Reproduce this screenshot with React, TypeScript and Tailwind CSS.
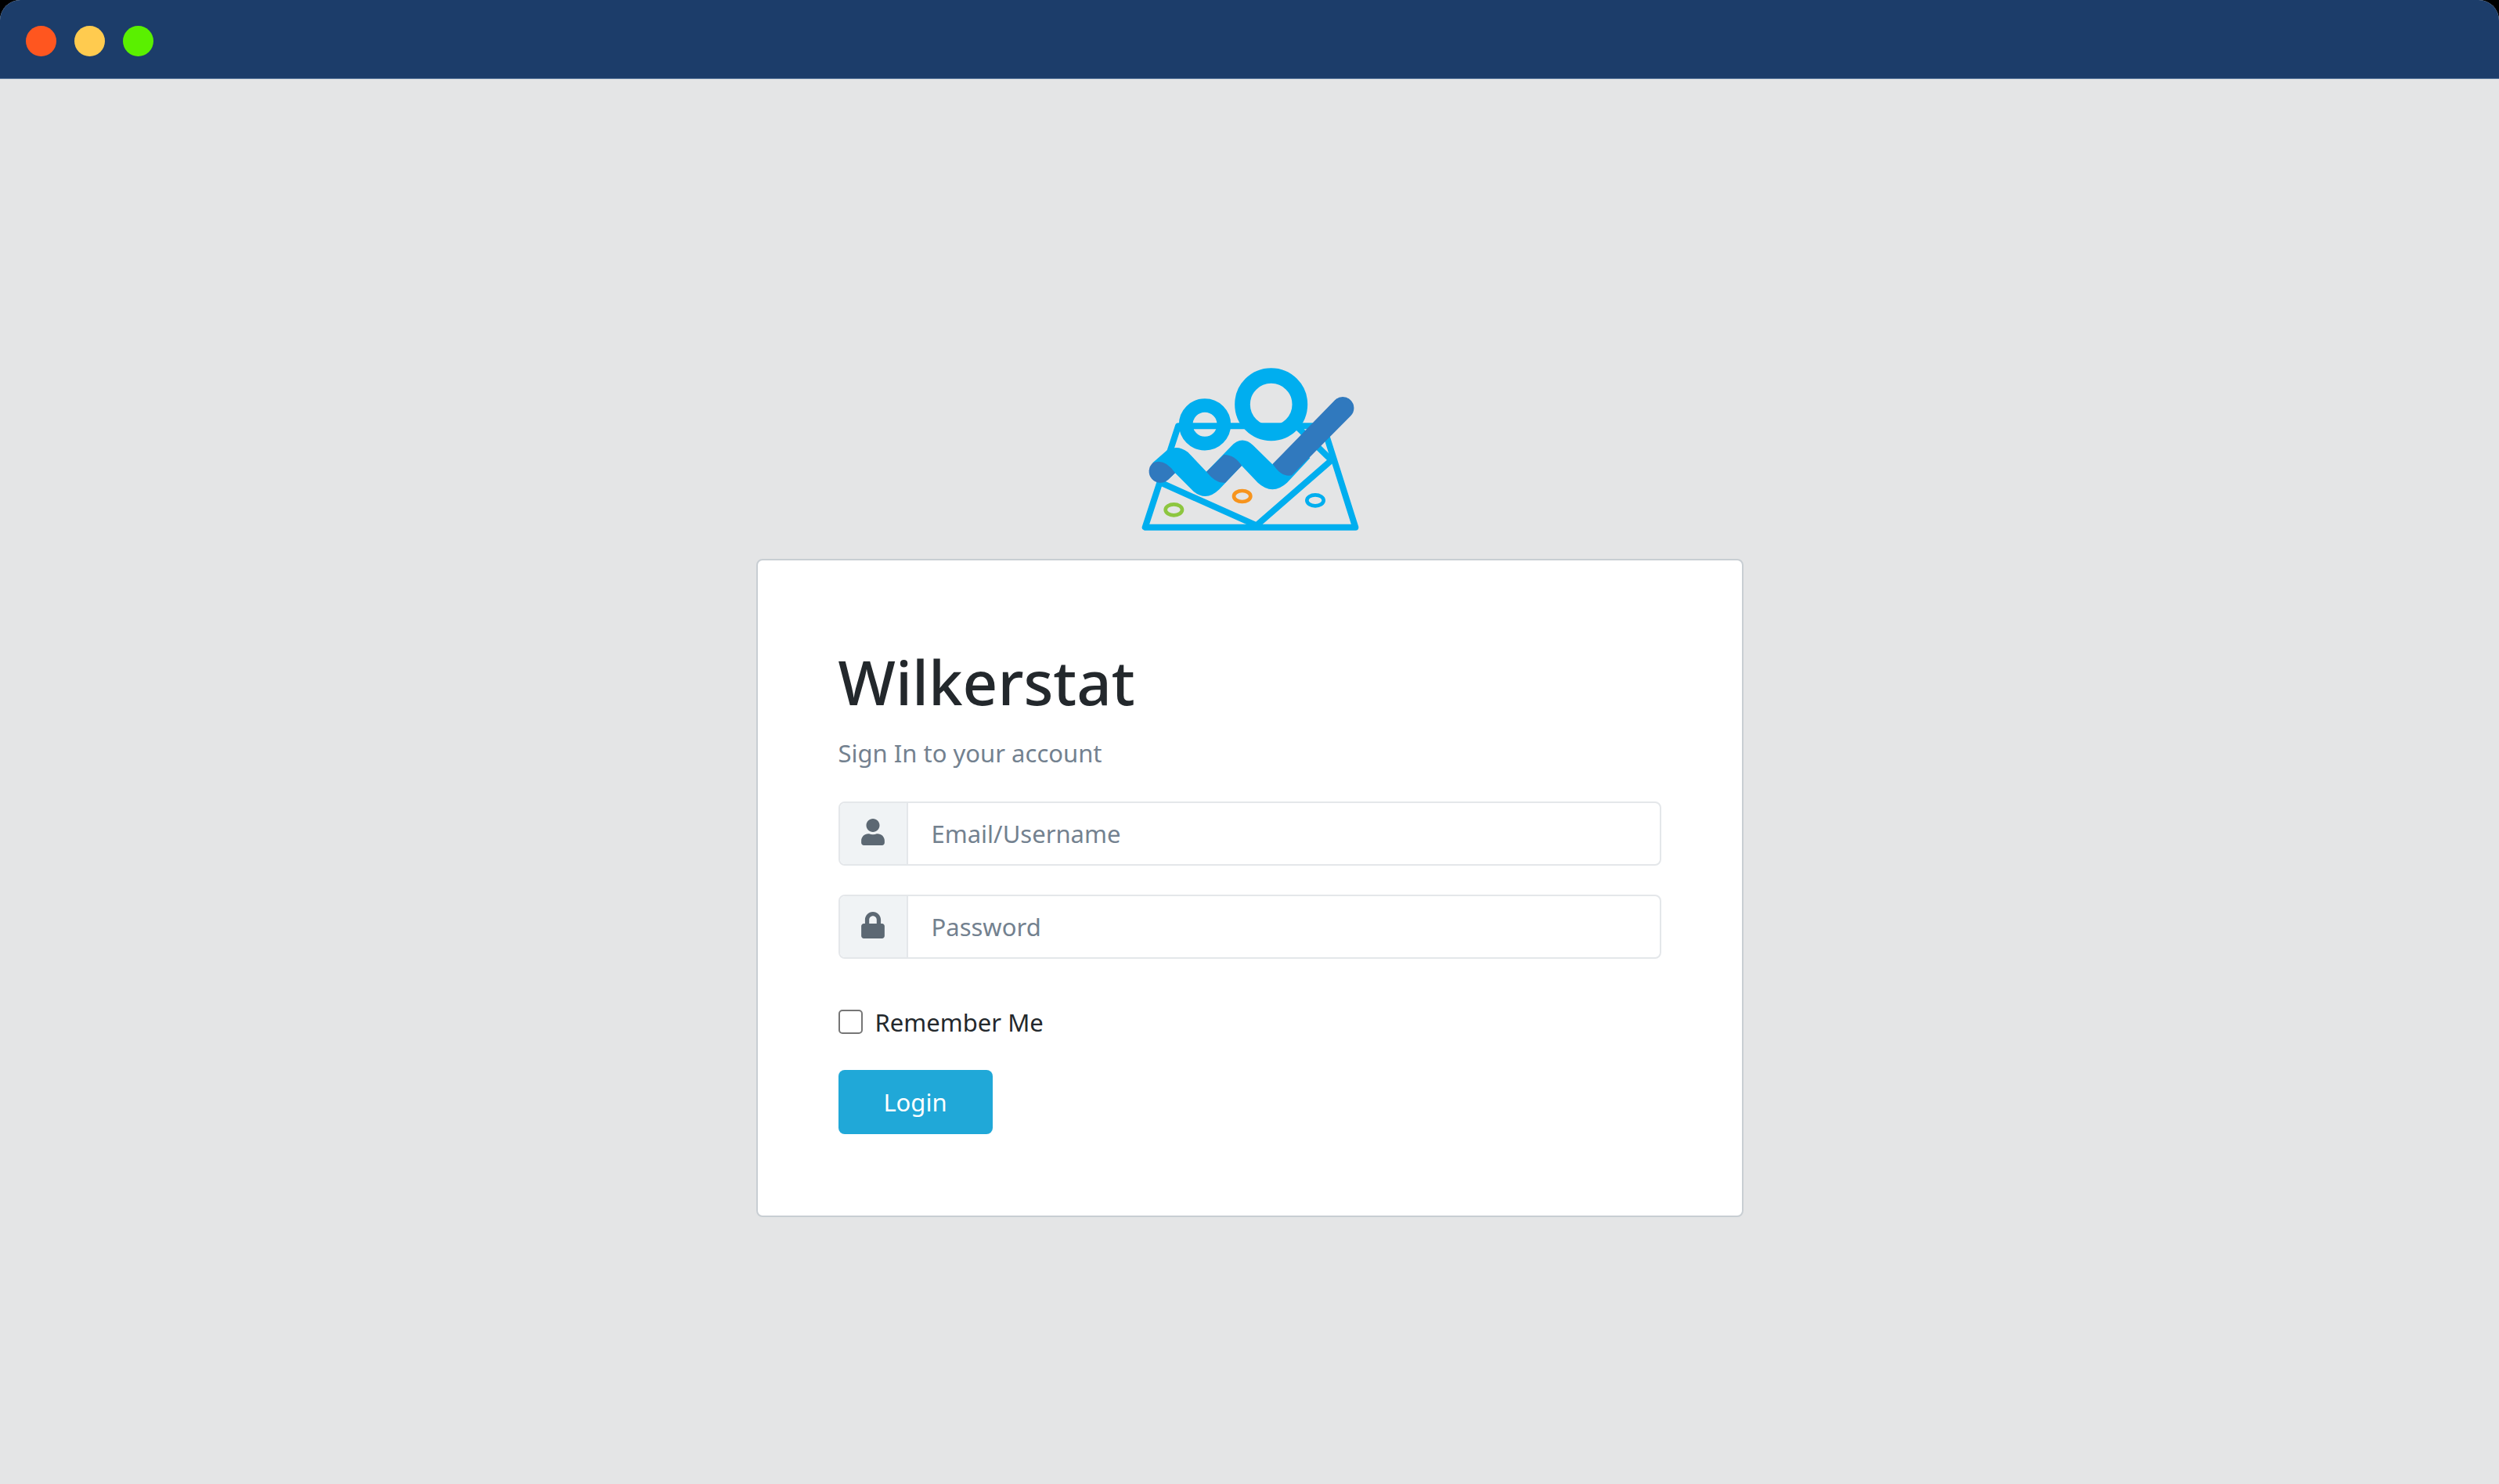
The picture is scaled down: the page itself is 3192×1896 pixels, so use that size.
import { FaLock, FaUser } from "react-icons/fa";
import type { ReactNode } from "react";

function Logo() {
  return (
    <svg
      viewBox="0 -21 936 813"
      className="h-[271px] w-[312px]"
      role="img"
      aria-label="Wilkerstat"
      fill="none"
    >
      <g stroke="#00aeef" strokeWidth="24" strokeLinejoin="round">
        <path d="M68 671H874L751 283H195Z" />
        <path d="M128 500L495 664L782 414L655 290" />
      </g>
      <circle cx="297" cy="277" r="73" stroke="#00aeef" strokeWidth="53" />
      <circle cx="551" cy="200" r="110" stroke="#00aeef" strokeWidth="59" />
      <path
        fill="#00aeef"
        d="M97 424L152 376Q192 353 232 383L303 458L396 362Q438 316 482 357L556 430L640 346L700 406L612 500Q556 551 500 500L438 435L352 526Q303 574 254 534L183 463L155 490Z"
      />
      <g fill="#3079be">
        <path d="M98 424Q143 405 183 463L155 490A42 42 0 1 1 98 424Z" />
        <path d="M303 458L370 393Q410 392 438 435L375 500Q340 505 303 458Z" />
        <path d="M557 428L795 184A42 42 0 0 1 856 244L630 472Q590 480 557 428Z" />
      </g>
      <g strokeWidth="14">
        <ellipse cx="178" cy="604" rx="32" ry="21" stroke="#8dc63f" />
        <ellipse cx="440" cy="552" rx="32" ry="21" stroke="#f7941d" />
        <ellipse cx="720" cy="568" rx="32" ry="21" stroke="#00aeef" />
      </g>
    </svg>
  );
}

type FieldProps = {
  id: string;
  type: string;
  label: string;
  icon: ReactNode;
};

function Field({ id, type, label, icon }: FieldProps) {
  return (
    <div className="flex h-[82px] overflow-hidden rounded-lg border-2 border-[#e4e7ea] bg-white">
      <label
        htmlFor={id}
        aria-label={label}
        className="flex w-[87px] shrink-0 items-center justify-center border-r-2 border-[#e4e7ea] bg-[#f0f3f5] pb-1 text-[34px] text-[#5c6873]"
      >
        {icon}
      </label>
      <input
        id={id}
        type={type}
        placeholder={label}
        className="min-w-0 flex-1 bg-transparent px-[30px] text-[31px] text-[#5c6873] outline-none placeholder:text-[#73818f]"
      />
    </div>
  );
}

export default function App() {
  return (
    <div className="bg-black">
      <div className="flex min-h-screen flex-col overflow-hidden rounded-t-[26px] bg-[#e4e5e6] font-['Noto_Sans','Open_Sans',sans-serif] text-[31px] leading-[48px] text-[#23282c]">
        <header className="flex h-[101px] items-center gap-[23px] border-b border-[#5f7d9f] bg-[#1c3d6a] px-[33px] pt-1">
          <span className="size-[39px] rounded-full bg-[#ff561f]" />
          <span className="size-[39px] rounded-full bg-[#ffcb4f]" />
          <span className="size-[39px] rounded-full bg-[#5af000]" />
        </header>
        <main className="flex flex-1 flex-col items-center justify-center">
          <Logo />
          <form
            className="w-full max-w-[1261px] rounded-lg border-2 border-[#c8ced3] bg-white px-[103px] pt-[102px] pb-[104px]"
            onSubmit={(event) => event.preventDefault()}
          >
            <h1 className="text-[78px] leading-[106px] font-medium">Wilkerstat</h1>
            <p className="mt-3.5 text-[#73818f]">Sign In to your account</p>
            <div className="mt-[38px] flex flex-col gap-[37px]">
              <Field id="username" type="text" label="Email/Username" icon={<FaUser />} />
              <Field id="password" type="password" label="Password" icon={<FaLock />} />
            </div>
            <div className="mt-[57px] flex items-center gap-4">
              <input
                id="remember"
                type="checkbox"
                className="size-[31px] appearance-none rounded-[5px] border-2 border-[#767676] bg-white checked:bg-[#20a8d8]"
              />
              <label htmlFor="remember">Remember Me</label>
            </div>
            <button
              type="submit"
              className="mt-[37px] h-[82px] w-[197px] rounded-lg bg-[#20a8d8] text-white"
            >
              Login
            </button>
          </form>
        </main>
      </div>
    </div>
  );
}
